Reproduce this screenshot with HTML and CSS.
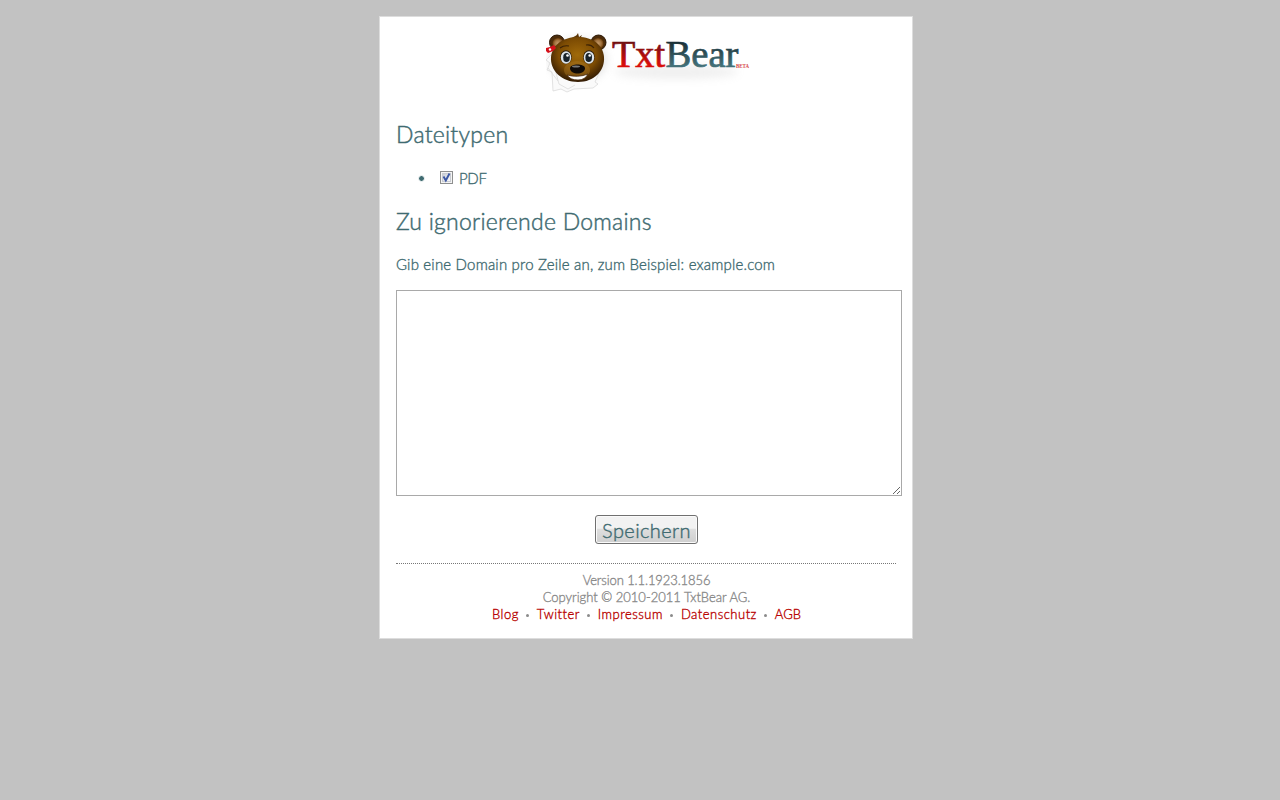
FILE: index.html
```html
<!DOCTYPE html>
<html lang="de">
<head>
<meta charset="utf-8">
<title>TxtBear</title>
<link rel="stylesheet" href="styles.css">
</head>
<body>
<main class="card">
  <svg class="logo" width="210" height="64" viewBox="0 0 210 64" role="img" aria-label="TxtBear Beta">
    <defs>
      <linearGradient id="red" x1="0" y1="0" x2="0" y2="1"><stop offset=".2" stop-color="#6c1012"/><stop offset=".75" stop-color="#d80d0a"/></linearGradient>
      <linearGradient id="teal" x1="0" y1="0" x2="0" y2="1"><stop offset=".2" stop-color="#182d34"/><stop offset=".78" stop-color="#437078"/></linearGradient>
      <radialGradient id="fur" cx=".5" cy=".4" r=".6"><stop offset="0" stop-color="#a06a0a"/><stop offset=".6" stop-color="#7c4b03"/><stop offset="1" stop-color="#321b04"/></radialGradient>
      <radialGradient id="ear"><stop offset="0" stop-color="#c59a69"/><stop offset=".6" stop-color="#a27440"/><stop offset="1" stop-color="#6b3c0a"/></radialGradient>
      <filter id="soft" x="-20%" y="-100%" width="140%" height="300%"><feGaussianBlur stdDeviation="4"/></filter>
    </defs>
    <ellipse cx="130" cy="40" rx="62" ry="7" fill="#aaa" opacity=".18" filter="url(#soft)"/>
    <g transform="translate(-2 -2)">
    <ellipse cx="34" cy="30" rx="29" ry="22" fill="#999" opacity=".25" filter="url(#soft)"/>
    <g fill="#fafafa" stroke="#dadada" stroke-width=".8">
      <path d="M7 25L2 30l4 3-3 7 5 2 1 19 8-2 6 3 7-3 19-1 5-4-3-2 4-9-25-19z"/>
      <path d="M8 28l7 26 9 5 7-4M4 38l10 13"/>
    </g>
    <g fill="#4c2c0a" stroke="#2b1705">
      <circle cx="13" cy="12.500" r="7.500"/><circle cx="54.500" cy="12.500" r="7.500"/>
    </g>
    <circle cx="14" cy="13.500" r="5.500" fill="url(#ear)"/><circle cx="54" cy="13.500" r="5.500" fill="url(#ear)"/>
    <path d="M28 8c2-2 4-1 6-5l1 4 3-2-2 4" fill="#5b3505"/>
    <path d="M34 7c15 0 25 8 26 20 1 14-10 25-26 25S6 41 7 27C8 15 19 7 34 7z" fill="url(#fur)"/>
    <ellipse cx="33" cy="40" rx="13" ry="9" fill="#ad7b28" opacity=".4"/>
    <g fill="#2a1a0a"><ellipse cx="22" cy="27" rx="5.800" ry="6.800"/><ellipse cx="45" cy="27" rx="5.800" ry="6.800"/></g>
    <g fill="#dde4ea"><ellipse cx="22" cy="27.500" rx="5.200" ry="6.200"/><ellipse cx="45" cy="27.500" rx="5.200" ry="6.200"/></g>
    <g fill="#18222a"><ellipse cx="22.500" cy="27.500" rx="3.300" ry="4.600"/><ellipse cx="44.700" cy="27.500" rx="3.300" ry="4.600"/></g>
    <g fill="#fff"><circle cx="23.500" cy="25.500" r="1.300"/><circle cx="45.700" cy="25.500" r="1.300"/></g>
    <path d="M16 18q4-3 9-2M42 15q5-1 8 3" fill="none" stroke="#3b2105" stroke-width="1.200"/>
    <path d="M23 45q11 3 21-1-3 6-10 6-8 0-11-5z" fill="#fff" stroke="#45260a" stroke-width=".8"/>
    <path d="M26 38.500c0-3 4-4 7.500-4s7.500 1 7.500 4-4 5-7.500 5-7.500-2-7.500-5z" fill="#100b08"/>
    <ellipse cx="32" cy="36.500" rx="4" ry="1" fill="#777"/>
    <path d="M2 18l4-1 4-2 2 3-3 3-5 2-2-2z" fill="#d5101a"/>
    <circle cx="6" cy="19.500" r="1.200" fill="#fff"/>
    </g>
    <text class="brand" x="66" y="34.800" textLength="53" lengthAdjust="spacingAndGlyphs" fill="url(#red)" stroke="url(#red)">Txt</text>
    <text class="brand" x="119.500" y="34.800" textLength="73" lengthAdjust="spacingAndGlyphs" fill="url(#teal)" stroke="url(#teal)">Bear</text>
    <text class="beta" x="190" y="35.500" textLength="13" lengthAdjust="spacingAndGlyphs">BETA</text>
  </svg>

  <h2 class="title title-types">Dateitypen</h2>
  <ul class="types">
    <li class="type">
      <span class="dot"></span>
      <svg class="check" width="13" height="13" viewBox="0 0 13 13"><defs><linearGradient id="box" x1="0" y1="0" x2="1" y2="1"><stop stop-color="#c5c9d2"/><stop offset="1" stop-color="#fff"/></linearGradient></defs><rect x=".5" y=".5" width="12" height="12" fill="#f4f4f4" stroke="#8e8f8f"/><rect x="2.500" y="2.500" width="8" height="8" fill="url(#box)" stroke="#c9ccd2"/><path d="M3.500 5.500l2.300 4L9.500 2.500" fill="none" stroke="#3b56a4" stroke-width="1.900"/></svg>
      <span class="pdf">PDF</span>
    </li>
  </ul>
  <h2 class="title title-domains">Zu ignorierende Domains</h2>
  <p class="hint">Gib eine Domain pro Zeile an, zum Beispiel: example.com</p>
  <textarea class="domains"></textarea>
  <button class="save">Speichern</button>
  <footer class="footer">
    <div class="version">Version 1.1.1923.1856</div>
    <div class="copyright">Copyright © 2010-2011 TxtBear AG.</div>
    <nav class="links"><a class="link">Blog</a><i></i><a class="link">Twitter</a><i></i><a class="link">Impressum</a><i></i><a class="link">Datenschutz</a><i></i><a class="link last">AGB</a></nav>
  </footer>
</main>
</body>
</html>
```
FILE: styles.css
```css
* { box-sizing: border-box; }
body { margin: 0; padding: 16px 0 0 379px; background: #c2c2c2; color: #3f6b71; font-family: Lato, "Open Sans", sans-serif; font-weight: 300; }
.card { display: flex; flex-direction: column; width: 534px; height: 623px; padding: 16px; border: 1px solid #ddd; background: #fff; }
.logo { display: block; margin-left: 150px; margin-top: -1px; flex: none; }
.brand { font: 38px "Liberation Serif", serif; stroke-width: .7px; }
.beta { font: bold 7px "Liberation Serif", serif; fill: #d64545; }
.title { margin: 0; height: 30px; line-height: 30px; font-size: 23px; font-weight: 300; letter-spacing: .25px; white-space: nowrap; -webkit-text-stroke: .45px; }
.title-types { margin-top: 23px; }
.title-domains { margin-top: 18px; }
.types { list-style: none; margin: 19px 0 0; padding: 0 0 0 22px; }
.type { display: flex; align-items: center; height: 20px; font-size: 15px; }
.dot { width: 7px; height: 7px; border: .5px solid #fff; border-radius: 50%; background: #3f6b71; }
.check { margin: 0 6px 2px 15px; }
.pdf { letter-spacing: -.3px; -webkit-text-stroke: .35px; }
.hint { margin: 18px 0 0; height: 20px; line-height: 20px; font-size: 15px; letter-spacing: .19px; white-space: nowrap; -webkit-text-stroke: .35px; }
.domains { display: block; width: 506px; height: 206px; flex: none; margin: 16px 0 0; border: 1px solid #a9a9a9; background: #fff; resize: both; outline: 0; }
.save { align-self: center; width: 103px; height: 29px; flex: none; margin: 19px 0 0 1px; padding: 0; border: 1px solid #707070; border-radius: 3px; box-shadow: inset 0 0 0 1px #fafafa; background: linear-gradient(#f2f2f2 0 45%, #dedede 50%, #cfcfcf); color: #3f6b71; font: 300 20px/26px Lato, sans-serif; letter-spacing: .4px; -webkit-text-stroke: .4px; }
.footer { margin-top: 19px; padding-top: 8px; border-top: 1px dotted #777; color: #8b8b8b; font-size: 13px; line-height: 17px; text-align: center; white-space: nowrap; -webkit-text-stroke: .35px; }
.version { padding-left: 1px; letter-spacing: -.1px; }
.copyright { padding-left: 1px; }
.links { display: flex; justify-content: center; align-items: center; padding-left: 1px; color: #b90504; }
.link { letter-spacing: .5px; }
.last { letter-spacing: 0; }
.links i { width: 3px; height: 3px; margin: 1px 7.500px 0; border-radius: 50%; background: #8b8b8b; }
```
